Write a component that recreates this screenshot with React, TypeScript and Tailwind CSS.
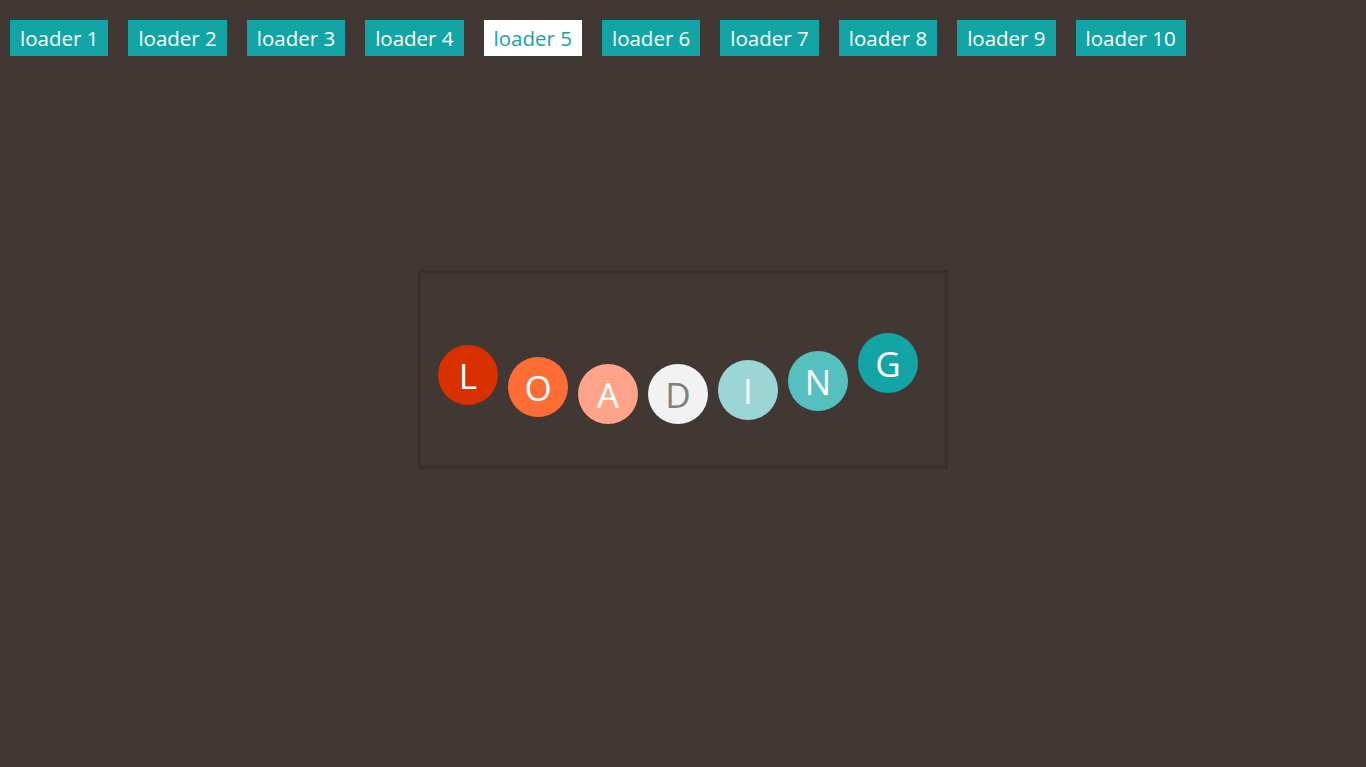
import React from "react";

const loaders = [
  "loader 1",
  "loader 2",
  "loader 3",
  "loader 4",
  "loader 5",
  "loader 6",
  "loader 7",
  "loader 8",
  "loader 9",
  "loader 10",
];

// snapshot of the bouncing letters, offsets from the box's inner top
const letters = [
  { ch: "L", cls: "bg-[#d93000] text-white mt-[72px]" },
  { ch: "O", cls: "bg-[#ff6d36] text-white mt-[84px]" },
  { ch: "A", cls: "bg-[#ffa48b] text-white mt-[91px]" },
  { ch: "D", cls: "bg-[#f2f2f2] text-[#808080] mt-[91px]" },
  { ch: "I", cls: "bg-[#9cd5d6] text-white mt-[87px]" },
  { ch: "N", cls: "bg-[#56bfc0] text-white mt-[78px]" },
  { ch: "G", cls: "bg-[#13a4a6] text-white mt-[60px]" },
];

export default function App() {
  const active = 4;
  return (
    <div className="min-h-[767px] bg-[#413833] font-['Open_Sans','Noto_Sans',sans-serif]">
      <nav className="flex gap-[20px] pl-[10px] pt-[20px]">
        {loaders.map((name, i) => (
          <button
            key={name}
            className={
              "h-9 px-[10px] text-[20.5px] leading-9 " +
              (i === active ? "bg-white text-[#13a4a6]" : "bg-[#13a4a6] text-white")
            }
          >
            {name}
          </button>
        ))}
      </nav>

      <div className="mx-auto mt-[214px] h-[199px] w-[530px] border-[3px] border-[#3a312d]">
        <div className="flex items-start gap-[10px] pl-[17px]">
          {letters.map((l) => (
            <div
              key={l.ch}
              className={
                "flex h-[60px] w-[60px] items-center justify-center rounded-full text-[35px] leading-none " +
                l.cls
              }
            >
              {l.ch}
            </div>
          ))}
        </div>
      </div>
    </div>
  );
}
